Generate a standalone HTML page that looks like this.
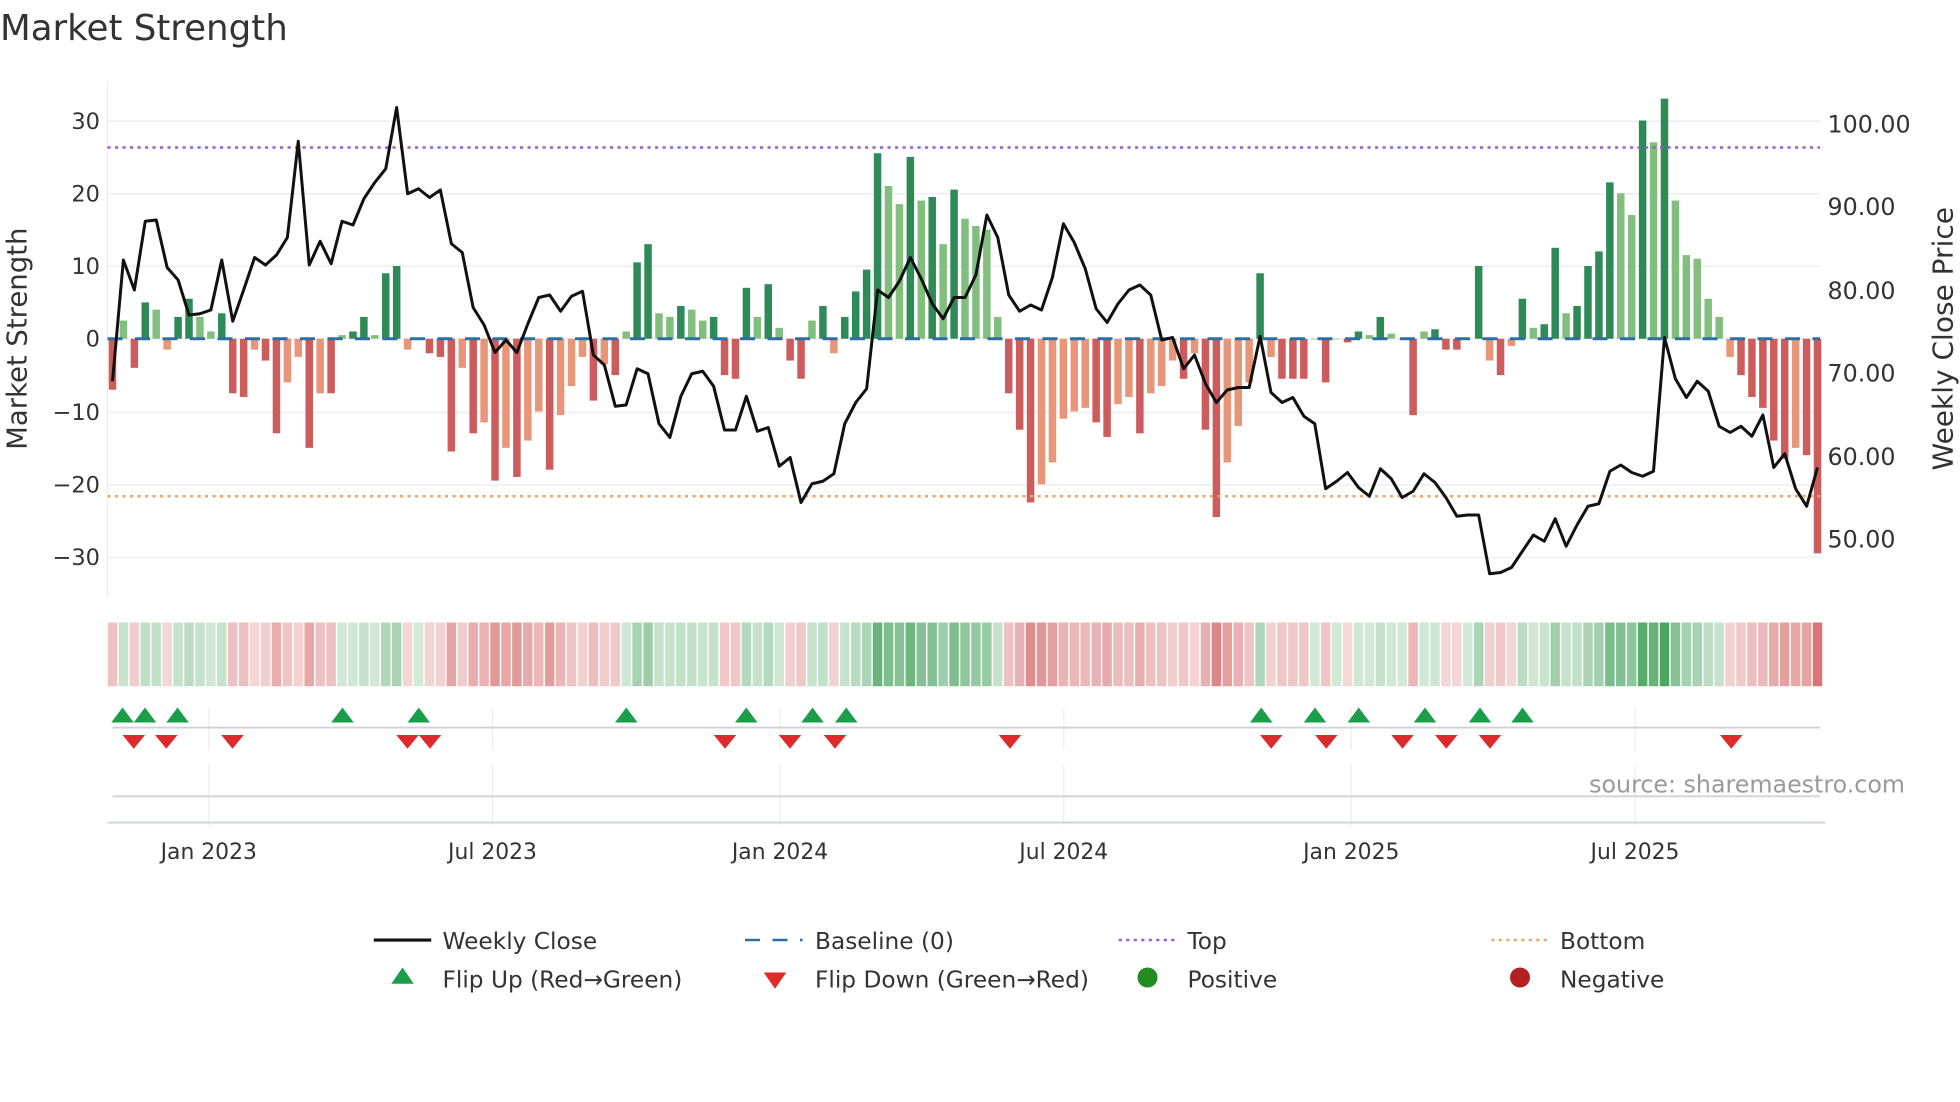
<!DOCTYPE html>
<html><head><meta charset="utf-8"><style>
html,body{margin:0;padding:0;background:#fff;width:1960px;height:1102px;overflow:hidden}
svg{display:block}
text{font-family:"DejaVu Sans","Liberation Sans",sans-serif;fill:#333}
</style></head><body>
<svg id="s" width="1960" height="1102" viewBox="0 0 1568 881.6" xmlns="http://www.w3.org/2000/svg">
<text x="0" y="32" font-size="28.5">Market Strength</text>
<g id="grid"></g>
<line x1="86" y1="65" x2="86" y2="478" stroke="#eceef2" stroke-width="1"/>
<g id="bars"></g>
<line x1="86" y1="271" x2="1456" y2="271" stroke="#2b6fa3" stroke-width="2.4" stroke-dasharray="12,10"/>
<line x1="86" y1="118" x2="1456" y2="118" stroke="#9b5bd6" stroke-width="2" stroke-dasharray="2.5,3.5"/>
<line x1="86" y1="397" x2="1456" y2="397" stroke="#eda66a" stroke-width="2" stroke-dasharray="2.5,3.5"/>
<polyline id="close" fill="none" stroke="#111" stroke-width="2.4" stroke-linejoin="round"/>
<g font-size="18" text-anchor="end">
<text x="80" y="103">30</text><text x="80" y="161">20</text><text x="80" y="219">10</text><text x="80" y="277">0</text>
<text x="80" y="336">−10</text><text x="80" y="394">−20</text><text x="80" y="452">−30</text>
</g>
<g font-size="19">
<text x="1462" y="106">100.00</text><text x="1462" y="172">90.00</text><text x="1462" y="239">80.00</text>
<text x="1462" y="305">70.00</text><text x="1462" y="372">60.00</text><text x="1462" y="438">50.00</text>
</g>
<text transform="translate(21,271) rotate(-90)" font-size="22" text-anchor="middle">Market Strength</text>
<text transform="translate(1562,271) rotate(-90)" font-size="22.4" text-anchor="middle">Weekly Close Price</text>
<g id="heat"></g>
<g id="vgrid" stroke="#eceef2" stroke-width="1"></g>
<line x1="90" y1="582" x2="1456" y2="582" stroke="#cfd2d6" stroke-width="1.5"/>
<line x1="90" y1="637" x2="1456" y2="637" stroke="#cfd2d6" stroke-width="1.5"/>
<line x1="86" y1="658" x2="1460" y2="658" stroke="#cfd2d6" stroke-width="1.5"/>
<g id="marks"></g>
<text x="1524" y="634" font-size="19" text-anchor="end" style="fill:#9a9a9a">source: sharemaestro.com</text>
<g font-size="17.5" text-anchor="middle">
<text x="167" y="687">Jan 2023</text><text x="394" y="687">Jul 2023</text><text x="624" y="687">Jan 2024</text>
<text x="851" y="687">Jul 2024</text><text x="1081" y="687">Jan 2025</text><text x="1308" y="687">Jul 2025</text>
</g>
<g font-size="18.6">
<line x1="299" y1="752" x2="345" y2="752" stroke="#111" stroke-width="2.5"/><text x="354" y="759">Weekly Close</text>
<line x1="596" y1="752" x2="642" y2="752" stroke="#2b6fa3" stroke-width="2" stroke-dasharray="12,10"/><text x="652" y="759">Baseline (0)</text>
<line x1="895" y1="752" x2="940" y2="752" stroke="#9b5bd6" stroke-width="2" stroke-dasharray="2.5,3.5"/><text x="950" y="759">Top</text>
<line x1="1193" y1="752" x2="1238" y2="752" stroke="#eda66a" stroke-width="2" stroke-dasharray="2.5,3.5"/><text x="1248" y="759">Bottom</text>
<polygon points="313,787 331,787 322,774" fill="#1a9e4a"/><text x="354" y="790">Flip Up (Red→Green)</text>
<polygon points="611,778 629,778 620,791" fill="#dd2a2a"/><text x="652" y="790">Flip Down (Green→Red)</text>
<circle cx="918" cy="782" r="8" fill="#228b22"/><text x="950" y="790">Positive</text>
<circle cx="1216" cy="782" r="8" fill="#b22222"/><text x="1248" y="790">Negative</text>
</g>
</svg>
<script>
var V=[-7,2.5,-4,5,4,-1.5,3,5.5,3,1,3.5,-7.5,-8,-1.5,-3,-13,-6,-2.5,-15,-7.5,-7.5,0.5,1,3,0.5,9,10,-1.5,0,-2,-2.5,-15.5,-4,-13,-11.5,-19.5,-15,-19,-14,-10,-18,-10.5,-6.5,-2.5,-8.5,-3.5,-5,1,10.5,13,3.5,3,4.5,4,2.5,3,-5,-5.5,7,3,7.5,1.5,-3,-5.5,2.5,4.5,-2,3,6.5,9.5,25.5,21,18.5,25,19,19.5,13,20.5,16.5,15.5,15,3,-7.5,-12.5,-22.5,-20,-17,-11,-10,-9.5,-11.5,-13.5,-9,-8,-13,-7.5,-6.5,-3,-5.5,-2,-12.5,-24.5,-17,-12,-6,9,-2.5,-5.5,-5.5,-5.5,0,-6,0,-0.5,1,0.5,3,0.7,0,-10.5,1,1.3,-1.5,-1.5,0,10,-3,-5,-1,5.5,1.5,2,12.5,3.5,4.5,10,12,21.5,20,17,30,27,33,19,11.5,11,5.5,3,-2.5,-5,-8,-9.5,-14,-16.5,-15,-16,-29.5];
var C=[305,208,232,177,176,214,224,252,251,248,208,257,232,206,212,204,190,113,212,193,211,177,180,159,146,135,86,155,151,158,152,195,202,246,260,282,272,282,259,238,236,249,237,233,284,292,325,324,295,299,339,350,317,299,297,309,344,344,317,345,342,373,366,402,387,385,379,339,322,311,232,238,225,206,223,243,255,238,238,220,172,190,236,249,244,248,222,179,194,215,247,258,243,232,228,236,272,270,295,284,307,322,312,310,310,269,314,322,318,333,339,391,385,378,390,397,375,383,398,393,379,386,398,413,412,412,459,458,454,441,428,433,415,437,420,405,403,377,372,378,381,377,270,303,318,305,313,341,346,341,349,332,374,363,391,405,374];
var N="http://www.w3.org/2000/svg";
function el(p,t,a){var e=document.createElementNS(N,t);for(var k in a)e.setAttribute(k,a[k]);document.getElementById(p).appendChild(e);return e}
[97,155,213,271,330,388,446].forEach(function(y){el("grid","line",{x1:86,x2:1456,y1:y,y2:y,stroke:"#eceef2","stroke-width":1.2})});
var step=(1454-90)/156,pts=[];
V.forEach(function(v,i){var x=90+i*step,prev=i?V[i-1]:0;var strong=Math.abs(v)>=Math.abs(prev);
var col=v>=0?(strong?"#2e8b57":"#82bf7f"):(strong?"#cd5c5c":"#e8967a");
var h=Math.abs(v)*5.82;el("bars","rect",{x:x-3,y:v>=0?271-h:271,width:6,height:Math.max(h,0.5),fill:col});
var a=Math.min(Math.abs(v)/33,1),alpha=0.25+0.75*a;
var hc=v>=0?"rgba(46,150,70,"+alpha.toFixed(2)+")":"rgba(205,80,80,"+alpha.toFixed(2)+")";
el("heat","rect",{x:x-3.8,y:498,width:7.6,height:51,fill:hc,opacity:0.85});
pts.push(x.toFixed(1)+","+C[i]);});
document.getElementById("close").setAttribute("points",pts.join(" "));
[167,394,624,851,1081,1308].forEach(function(x){el("vgrid","line",{x1:x,x2:x,y1:567,y2:600});el("vgrid","line",{x1:x,x2:x,y1:612,y2:660})});
[98,116,142,274,335,501,597,650,677,1009,1052,1087,1140,1184,1218].forEach(function(x){el("marks","polygon",{points:(x-9)+",578 "+(x+9)+",578 "+x+",566",fill:"#1a9e4a"})});
[107,133,186,326,344,580,632,668,808,1017,1061,1122,1157,1192,1385].forEach(function(x){el("marks","polygon",{points:(x-9)+",588 "+(x+9)+",588 "+x+",599",fill:"#dd2a2a"})});
</script>
</body></html>
